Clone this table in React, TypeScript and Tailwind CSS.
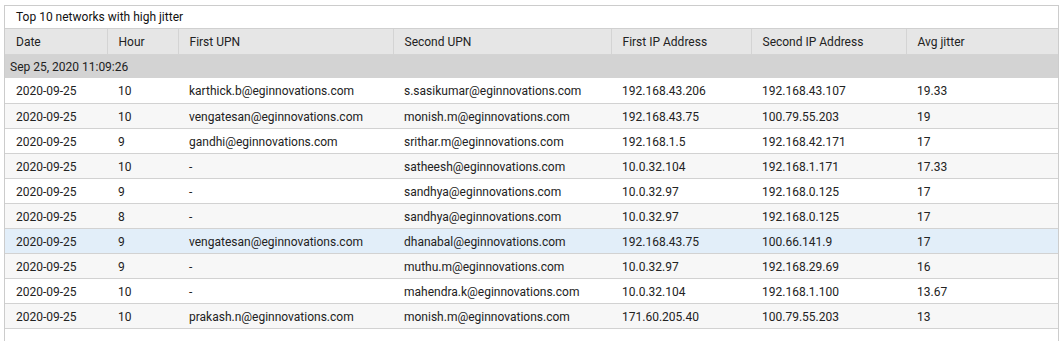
import React from 'react';

type Row = {
    date: string,
    hour: string,
    firstUpn: string,
    secondUpn: string,
    firstIp: string,
    secondIp: string,
    jitter: string
}

const rows: Row[] = [
    { date: '2020-09-25', hour: '10', firstUpn: 'karthick.b@eginnovations.com', secondUpn: 's.sasikumar@eginnovations.com', firstIp: '192.168.43.206', secondIp: '192.168.43.107', jitter: '19.33' },
    { date: '2020-09-25', hour: '10', firstUpn: 'vengatesan@eginnovations.com', secondUpn: 'monish.m@eginnovations.com', firstIp: '192.168.43.75', secondIp: '100.79.55.203', jitter: '19' },
    { date: '2020-09-25', hour: '9', firstUpn: 'gandhi@eginnovations.com', secondUpn: 'srithar.m@eginnovations.com', firstIp: '192.168.1.5', secondIp: '192.168.42.171', jitter: '17' },
    { date: '2020-09-25', hour: '10', firstUpn: '-', secondUpn: 'satheesh@eginnovations.com', firstIp: '10.0.32.104', secondIp: '192.168.1.171', jitter: '17.33' },
    { date: '2020-09-25', hour: '9', firstUpn: '-', secondUpn: 'sandhya@eginnovations.com', firstIp: '10.0.32.97', secondIp: '192.168.0.125', jitter: '17' },
    { date: '2020-09-25', hour: '8', firstUpn: '-', secondUpn: 'sandhya@eginnovations.com', firstIp: '10.0.32.97', secondIp: '192.168.0.125', jitter: '17' },
    { date: '2020-09-25', hour: '9', firstUpn: 'vengatesan@eginnovations.com', secondUpn: 'dhanabal@eginnovations.com', firstIp: '192.168.43.75', secondIp: '100.66.141.9', jitter: '17' },
    { date: '2020-09-25', hour: '9', firstUpn: '-', secondUpn: 'muthu.m@eginnovations.com', firstIp: '10.0.32.97', secondIp: '192.168.29.69', jitter: '16' },
    { date: '2020-09-25', hour: '10', firstUpn: '-', secondUpn: 'mahendra.k@eginnovations.com', firstIp: '10.0.32.104', secondIp: '192.168.1.100', jitter: '13.67' },
    { date: '2020-09-25', hour: '10', firstUpn: 'prakash.n@eginnovations.com', secondUpn: 'monish.m@eginnovations.com', firstIp: '171.60.205.40', secondIp: '100.79.55.203', jitter: '13' },
];

const columns = [
    { label: 'Date', width: 'w-[102px]' },
    { label: 'Hour', width: 'w-[71px]' },
    { label: 'First UPN', width: 'w-[215px]' },
    { label: 'Second UPN', width: 'w-[218px]' },
    { label: 'First IP Address', width: 'w-[140px]' },
    { label: 'Second IP Address', width: 'w-[155px]' },
    { label: 'Avg jitter', width: '' },
];

const HIGHLIGHTED = 6;

const App = () => {
    return (
        <div className="h-[341px] w-[1064px] bg-white pt-[5px] pl-[4px] font-['Roboto',sans-serif] text-[12px] text-[#222]">
            <div className="flex h-[336px] w-[1055px] flex-col border-x border-t border-[#cccccc]">
                <div className="flex h-[23px] items-center border-b border-[#d0d0d0] pl-[11px] text-[#111]">
                    Top 10 networks with high jitter
                </div>
                <table className="w-full table-fixed border-collapse">
                    <thead>
                        <tr className="h-[25px] bg-[#e6e6e6]">
                            {columns.map((col, i) => (
                                <th
                                    key={col.label}
                                    className={`${col.width} border-b border-[#d4d4d4] pt-[2px] pl-[11px] text-left font-normal ${i < columns.length - 1 ? 'border-r' : ''}`}
                                >
                                    {col.label}
                                </th>
                            ))}
                        </tr>
                    </thead>
                    <tbody>
                        <tr className="h-[24px] bg-[#d3d3d3]">
                            <td colSpan={7} className="pt-[1px] pl-[5px]">Sep 25, 2020 11:09:26</td>
                        </tr>
                        {rows.map((row, i) => (
                            <tr
                                key={i}
                                className={`h-[25px] border-b border-[#d2d2d2] [&>td]:pt-[2px] [&>td]:pl-[11px] ${i === HIGHLIGHTED ? 'bg-[#e2eef9]' : i % 2 === 1 ? 'bg-[#f7f7f7]' : 'bg-white'}`}
                            >
                                <td>{row.date}</td>
                                <td>{row.hour}</td>
                                <td>{row.firstUpn}</td>
                                <td>{row.secondUpn}</td>
                                <td>{row.firstIp}</td>
                                <td>{row.secondIp}</td>
                                <td>{row.jitter}</td>
                            </tr>
                        ))}
                    </tbody>
                </table>
            </div>
        </div>
    );
};

export default App;
